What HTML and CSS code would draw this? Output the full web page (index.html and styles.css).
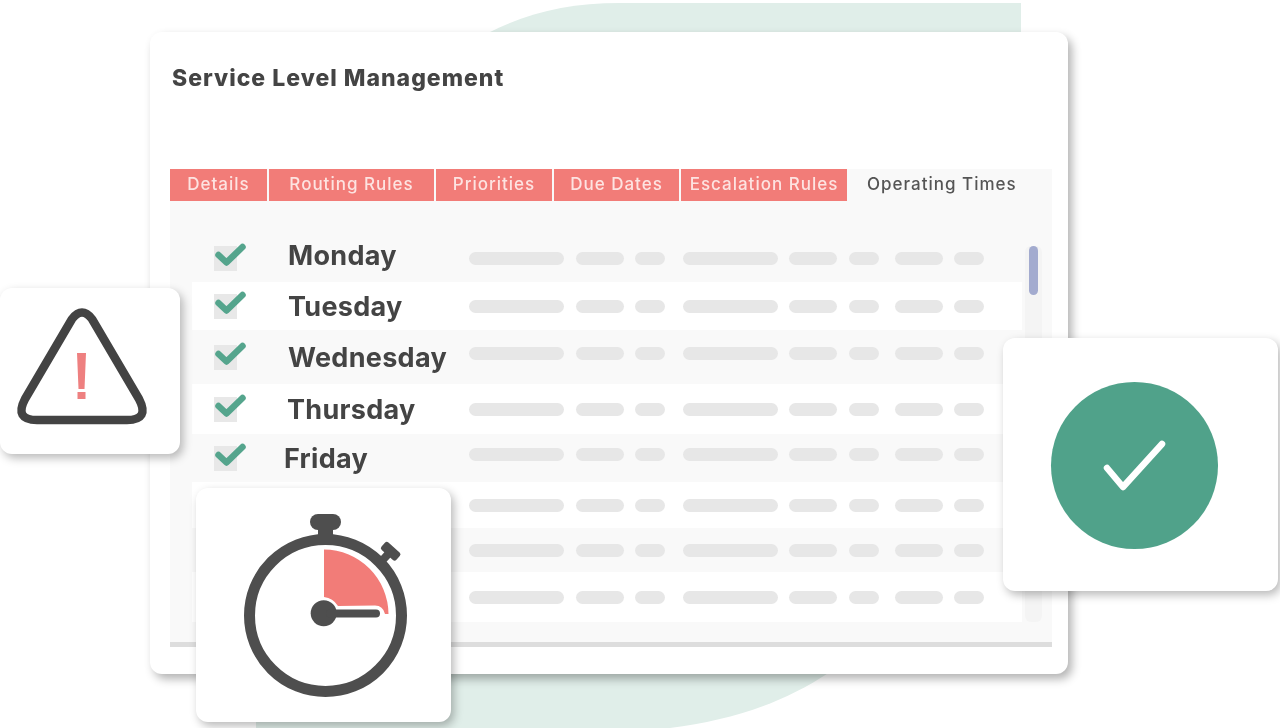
FILE: index.html
```html
<!DOCTYPE html>
<html lang="en">
<head>
    <meta charset="UTF-8">
    <meta name="viewport" content="width=device-width, initial-scale=1.0">
    <title>Service Level Management</title>
    <link rel="stylesheet" href="styles.css">
</head>
<body>
    <svg width="0" height="0" class="defs">
        <symbol id="tick" viewBox="0 0 32 28">
            <rect x="0" y="3" width="23" height="25" fill="#e8e8e8"/>
            <path d="M4.500 12 L12.500 19.500 L28.500 4" fill="none" stroke="#55a58d" stroke-width="6.500" stroke-linecap="round" stroke-linejoin="round"/>
        </symbol>
    </svg>
    <div class="stage">
        <svg class="blob" width="1280" height="728" viewBox="0 0 1280 728">
            <path d="M490 32 C530 12 570 3 620 3 L1021 3 L1021 300 L830 672 C780 705 730 720 670 728 L256 728 L256 600 Z" fill="#e0eee9"/>
        </svg>

        <div class="card">
            <h1>Service Level Management</h1>
            <div class="panel">
                <div class="tabs">
                    <div class="tab tab-details">Details</div>
                    <div class="tab tab-routing">Routing Rules</div>
                    <div class="tab tab-priorities">Priorities</div>
                    <div class="tab tab-due">Due Dates</div>
                    <div class="tab tab-escalation">Escalation Rules</div>
                    <div class="tab-active">Operating Times</div>
                </div>
                <div class="panel-body">
                    <div class="rows">
                        <div class="row row-monday">
                            <svg class="check"><use href="#tick"/></svg>
                            <div class="day">Monday</div>
                            <div class="bars">
                                <div class="group"><span class="bar long"></span><span class="bar mid"></span><span class="bar short"></span></div>
                                <div class="group"><span class="bar long"></span><span class="bar mid"></span><span class="bar short"></span></div>
                                <div class="group"><span class="bar mid"></span><span class="bar short"></span></div>
                            </div>
                        </div>
                        <div class="row row-tuesday white">
                            <svg class="check"><use href="#tick"/></svg>
                            <div class="day">Tuesday</div>
                            <div class="bars">
                                <div class="group"><span class="bar long"></span><span class="bar mid"></span><span class="bar short"></span></div>
                                <div class="group"><span class="bar long"></span><span class="bar mid"></span><span class="bar short"></span></div>
                                <div class="group"><span class="bar mid"></span><span class="bar short"></span></div>
                            </div>
                        </div>
                        <div class="row row-wednesday">
                            <svg class="check"><use href="#tick"/></svg>
                            <div class="day">Wednesday</div>
                            <div class="bars raised">
                                <div class="group"><span class="bar long"></span><span class="bar mid"></span><span class="bar short"></span></div>
                                <div class="group"><span class="bar long"></span><span class="bar mid"></span><span class="bar short"></span></div>
                                <div class="group"><span class="bar mid"></span><span class="bar short"></span></div>
                            </div>
                        </div>
                        <div class="row row-thursday white">
                            <svg class="check"><use href="#tick"/></svg>
                            <div class="day">Thursday</div>
                            <div class="bars">
                                <div class="group"><span class="bar long"></span><span class="bar mid"></span><span class="bar short"></span></div>
                                <div class="group"><span class="bar long"></span><span class="bar mid"></span><span class="bar short"></span></div>
                                <div class="group"><span class="bar mid"></span><span class="bar short"></span></div>
                            </div>
                        </div>
                        <div class="row row-friday">
                            <svg class="check"><use href="#tick"/></svg>
                            <div class="day">Friday</div>
                            <div class="bars raised">
                                <div class="group"><span class="bar long"></span><span class="bar mid"></span><span class="bar short"></span></div>
                                <div class="group"><span class="bar long"></span><span class="bar mid"></span><span class="bar short"></span></div>
                                <div class="group"><span class="bar mid"></span><span class="bar short"></span></div>
                            </div>
                        </div>
                        <div class="row row-sixth white">
                            <div class="bars no-label">
                                <div class="group"><span class="bar long"></span><span class="bar mid"></span><span class="bar short"></span></div>
                                <div class="group"><span class="bar long"></span><span class="bar mid"></span><span class="bar short"></span></div>
                                <div class="group"><span class="bar mid"></span><span class="bar short"></span></div>
                            </div>
                        </div>
                        <div class="row row-seventh">
                            <div class="bars no-label">
                                <div class="group"><span class="bar long"></span><span class="bar mid"></span><span class="bar short"></span></div>
                                <div class="group"><span class="bar long"></span><span class="bar mid"></span><span class="bar short"></span></div>
                                <div class="group"><span class="bar mid"></span><span class="bar short"></span></div>
                            </div>
                        </div>
                        <div class="row row-eighth white">
                            <div class="bars no-label">
                                <div class="group"><span class="bar long"></span><span class="bar mid"></span><span class="bar short"></span></div>
                                <div class="group"><span class="bar long"></span><span class="bar mid"></span><span class="bar short"></span></div>
                                <div class="group"><span class="bar mid"></span><span class="bar short"></span></div>
                            </div>
                        </div>
                    </div>
                    <div class="scrollbar"><div class="thumb"></div></div>
                </div>
                <div class="hscroll"></div>
            </div>
        </div>

        <div class="float alert-card">
            <svg width="180" height="166" viewBox="0 288 180 166">
                <path d="M72 319 L25 399 Q14 420 37 420 L127 420 Q150 420 139 399 L92 319 Q82 306 72 319 Z" fill="none" stroke="#434343" stroke-width="8.500" stroke-linejoin="round"/>
                <path d="M77 353 H86 L84.500 389 H78.500 Z M77.500 392 H85.500 V399 H77.500 Z" fill="#ee8080"/>
            </svg>
        </div>

        <div class="float timer-card">
            <svg width="255" height="234" viewBox="196 488 255 234">
                <circle cx="325.500" cy="615.500" r="76" fill="none" stroke="#4e4e4e" stroke-width="11"/>
                <rect x="310" y="514" width="31" height="16" rx="8" fill="#4e4e4e"/>
                <rect x="318" y="528" width="15" height="11" fill="#4e4e4e"/>
                <g transform="rotate(42 390 552)" fill="#4e4e4e">
                    <rect x="386" y="552" width="8" height="10"/>
                    <rect x="380" y="546" width="20" height="10" rx="2.500"/>
                </g>
                <path d="M324 549.500 A65 65 0 0 1 388.500 614 L385 614 Q383 605.500 375 605.500 L338 606 Q333 598 324 597 Z" fill="#f27c78"/>
                <circle cx="323.700" cy="613.300" r="13" fill="#4e4e4e"/>
                <path d="M330 613.500 H376" stroke="#4e4e4e" stroke-width="8" stroke-linecap="round"/>
            </svg>
        </div>

        <div class="float ok-card">
            <div class="ok-circle">
                <svg width="167" height="167" viewBox="1051 382 167 167">
                    <path d="M1107 468 L1123 487 L1162 444" fill="none" stroke="#fff" stroke-width="6.500" stroke-linecap="round" stroke-linejoin="round"/>
                </svg>
            </div>
        </div>
    </div>
</body>
</html>
```

FILE: styles.css
```css
body {
    margin: 0;
    background-color: #fff;
    font-family: Inter, "Liberation Sans", sans-serif;
    color: #444;
}
.defs {
    display: block;
    height: 0;
}
.stage {
    position: relative;
    width: 1280px;
    height: 728px;
    overflow: hidden;
}
.blob {
    position: absolute;
    left: 0;
    top: 0;
}
.card {
    position: absolute;
    left: 150px;
    top: 32px;
    width: 918px;
    height: 642px;
    box-sizing: border-box;
    padding: 29px 16px 0 20px;
    background-color: #fff;
    border-radius: 12px;
    box-shadow: 4px 5px 10px rgba(0,0,0,0.3);
    filter: blur(0.4px);
}
h1 {
    margin: 0 0 74px 2px;
    font-size: 23px;
    line-height: 34px;
    font-weight: 800;
    letter-spacing: 1px;
    white-space: nowrap;
    color: #444;
}
.panel {
    background-color: #f9f9f9;
}
.tabs {
    display: flex;
    gap: 2px;
    height: 32px;
    background-color: #f9f9f9;
}
.tab {
    display: flex;
    justify-content: center;
    align-items: center;
    padding-bottom: 2px;
    box-sizing: border-box;
    background-color: #f27c78;
    color: #fde3e1;
    font-size: 17px;
    font-weight: 500;
    letter-spacing: 1px;
    white-space: nowrap;
}
.tab-details { width: 97px; }
.tab-routing { width: 165px; }
.tab-priorities { width: 116px; }
.tab-due { width: 125px; }
.tab-escalation { width: 166px; }
.tab-active {
    margin-left: 18px;
    padding-bottom: 2px;
    align-self: center;
    color: #555;
    font-size: 17px;
    font-weight: 500;
    letter-spacing: 1px;
    white-space: nowrap;
}
.panel-body {
    display: flex;
    padding: 33px 0 20px 22px;
}
.rows {
    width: 830px;
}
.row {
    display: flex;
    align-items: center;
    padding-left: 22px;
    box-sizing: border-box;
}
.white {
    background-color: #fff;
}
.row-monday { height: 48px; }
.row-tuesday { height: 48px; }
.row-wednesday { height: 54px; }
.row-thursday { height: 50px; }
.row-friday { height: 48px; }
.row-sixth { height: 46px; }
.row-seventh { height: 44px; }
.row-eighth { height: 50px; }
.check {
    flex: none;
    width: 32px;
    height: 28px;
    margin-right: 42px;
    margin-bottom: 3px;
}
.day {
    width: 181px;
    flex: none;
    font-size: 27px;
    font-weight: 700;
    letter-spacing: 0.3px;
    white-space: nowrap;
    color: #444;
}
.row-monday .day {
    padding-bottom: 5px;
}
.row-friday .day {
    margin-left: -4px;
    width: 185px;
}
.row-thursday .day {
    margin-left: -1px;
    width: 182px;
}
.bars {
    display: flex;
    gap: 17.500px;
}
.bars.raised {
    padding-bottom: 8px;
}
.bars.no-label {
    margin-left: 255px;
}
.group {
    display: flex;
    gap: 11.500px;
}
.group:last-child {
    margin-left: -1.500px;
    gap: 11px;
}
.bar {
    display: block;
    height: 13px;
    background-color: #e7e7e7;
    border-radius: 7px;
}
.long { width: 95px; }
.mid { width: 48px; }
.short { width: 30px; }
.scrollbar {
    width: 17px;
    height: 376px;
    margin: 12px 0 0 3px;
    padding-left: 4px;
    box-sizing: border-box;
    background-color: #f4f4f4;
    border-radius: 6px;
}
.thumb {
    width: 9px;
    height: 49px;
    background-color: #a3abcf;
    border-radius: 5px;
}
.hscroll {
    height: 5px;
    background-color: #ddd;
}
.float {
    position: absolute;
    background-color: #fff;
    border-radius: 12px;
    box-shadow: 3px 4px 10px rgba(0,0,0,0.28);
}
.float svg {
    display: block;
}
.alert-card {
    left: 0;
    top: 288px;
    width: 180px;
    height: 166px;
}
.timer-card {
    left: 196px;
    top: 488px;
    width: 255px;
    height: 234px;
}
.ok-card {
    display: flex;
    justify-content: center;
    align-items: center;
    left: 1003px;
    top: 338px;
    width: 275px;
    height: 253px;
}
.ok-circle {
    width: 167px;
    height: 167px;
    margin-left: -13px;
    margin-top: 2px;
    border-radius: 50%;
    background-color: #50a28a;
}
```
